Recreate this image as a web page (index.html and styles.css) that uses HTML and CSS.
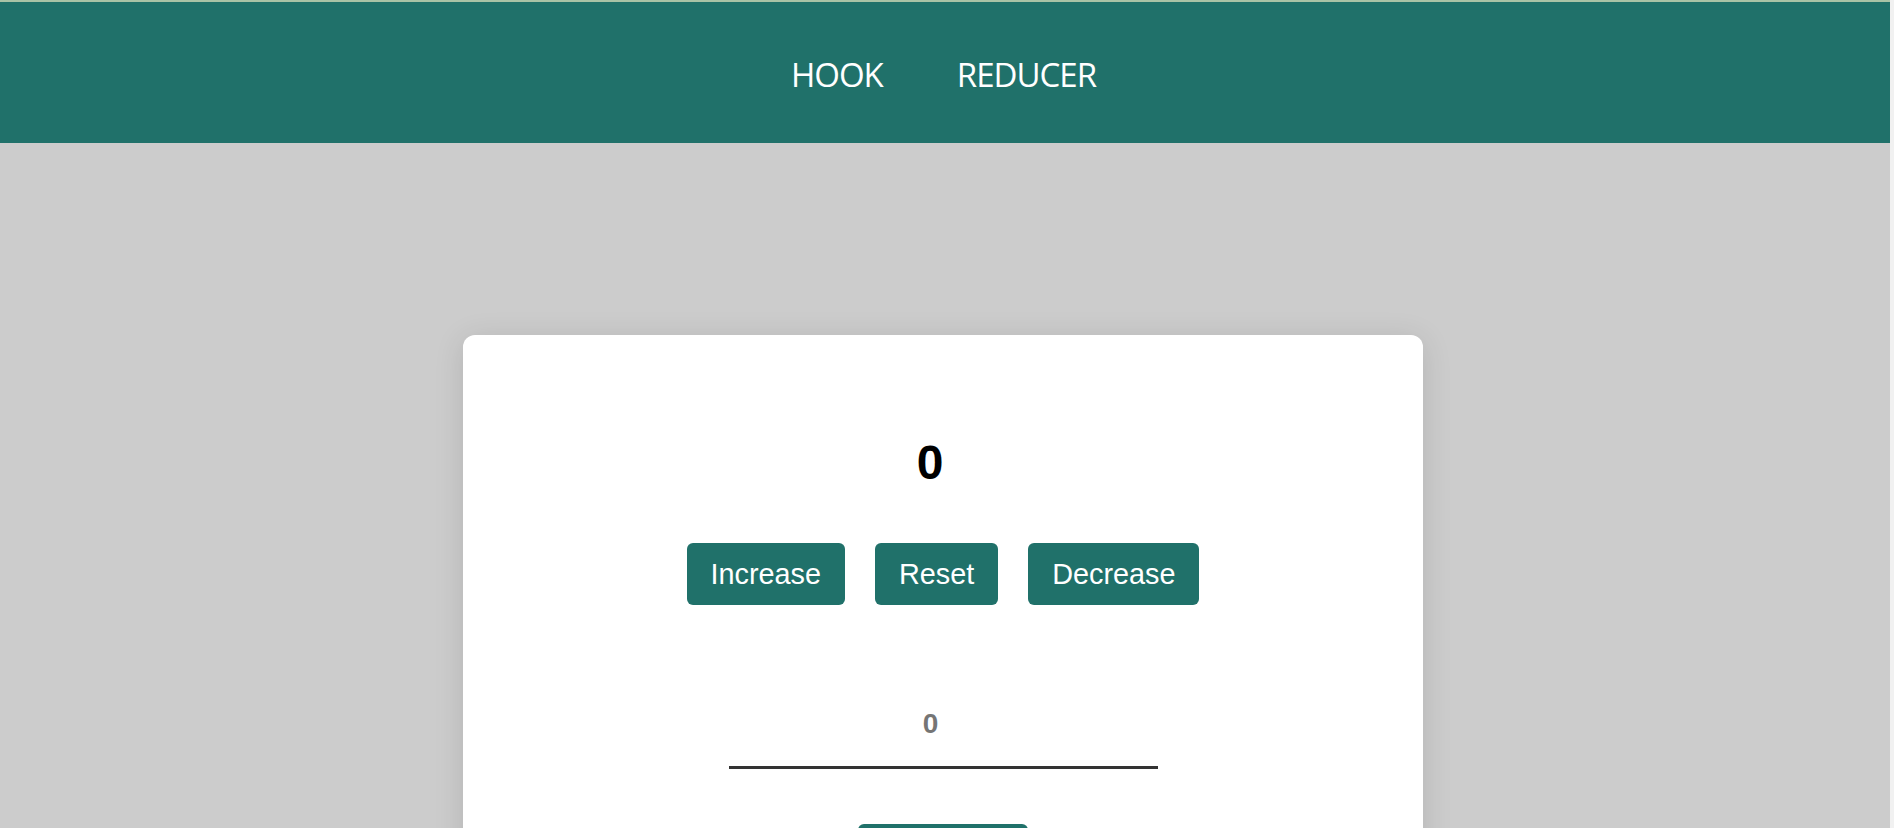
FILE: index.html
```html
<!DOCTYPE html>
<html lang="en">
<head>
<meta charset="utf-8">
<title>Counter</title>
<link rel="stylesheet" href="styles.css">
</head>
<body>
<div class="topline"></div>
<header class="header">
  <nav class="nav">
    <a class="nav-link" href="#">HOOK</a>
    <a class="nav-link" href="#">REDUCER</a>
  </nav>
</header>
<main class="main">
  <section class="card">
    <h1 class="count">0</h1>
    <div class="buttons">
      <button class="btn">Increase</button>
      <button class="btn">Reset</button>
      <button class="btn">Decrease</button>
    </div>
    <input class="amount" type="text" placeholder="0">
    <div class="set-row">
      <button class="btn">Set Value</button>
    </div>
  </section>
</main>
</body>
</html>
```

FILE: styles.css
```css
html {
  background: #f1f1f1;
}
body {
  margin: 0 4px 0 0;
  background: #cccccc;
  font-family: "Liberation Sans", Arial, sans-serif;
}
.topline {
  height: 2px;
  background: #a9c3a6;
}
.header {
  height: 141px;
  background: #20716a;
  display: flex;
  align-items: center;
  justify-content: center;
  padding-right: 3px;
}
.nav {
  display: flex;
  gap: 74px;
  padding-top: 3px;
}
.nav-link {
  font-family: "Open Sans", "Noto Sans", sans-serif;
  font-size: 33px;
  line-height: 45px;
  letter-spacing: -1px;
  color: #ffffff;
  text-decoration: none;
}
.main {
  padding: 192px 4px 120px 0;
}
.card {
  width: 960px;
  margin: 0 auto;
  background: #ffffff;
  border-radius: 12px;
  box-shadow: 0 4px 30px rgba(0, 0, 0, 0.12);
  padding: 100px 0 100px;
  display: flex;
  flex-direction: column;
  align-items: center;
}
.count {
  margin: 0;
  font-size: 48px;
  line-height: 55px;
  font-weight: bold;
  color: #000000;
  padding-right: 26px;
}
.buttons {
  display: flex;
  gap: 30px;
  margin-top: 53px;
}
.btn {
  font-family: "Liberation Sans", Arial, sans-serif;
  font-size: 28.8px;
  line-height: 34px;
  padding: 14px 24px;
  border: none;
  border-radius: 6px;
  background: #20716a;
  color: #ffffff;
}
.amount {
  margin-top: 77px;
  width: 429px;
  box-sizing: border-box;
  padding: 26px 25px 26px 0;
  border: none;
  border-bottom: 3px solid #333333;
  outline: none;
  text-align: center;
  font-family: "Liberation Sans", Arial, sans-serif;
  font-size: 28px;
  line-height: 32px;
  font-weight: bold;
  color: #757575;
  background: transparent;
}
.amount::placeholder {
  color: #757575;
}
.set-row {
  margin-top: 55px;
}
```
